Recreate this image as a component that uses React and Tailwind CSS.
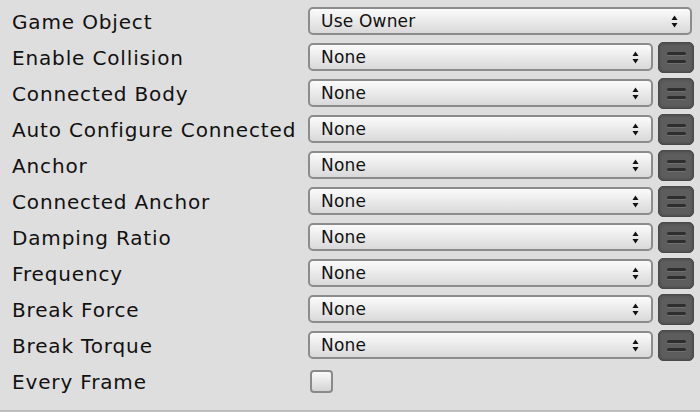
import React from "react";

const rows = [
  "Enable Collision",
  "Connected Body",
  "Auto Configure Connected",
  "Anchor",
  "Connected Anchor",
  "Damping Ratio",
  "Frequency",
  "Break Force",
  "Break Torque",
];

function Arrows() {
  return (
    <svg width="7" height="13" viewBox="0 0 7 13" className="shrink-0">
      <path d="M3.5 0.5 L6.5 5 L0.5 5 Z" fill="#111" />
      <path d="M3.5 12.5 L6.5 8 L0.5 8 Z" fill="#111" />
    </svg>
  );
}

function Select({ value, className }) {
  return (
    <div
      className={
        "flex items-center justify-between h-[28px] rounded-[5px] border-2 border-[#8c8c8c] bg-gradient-to-b from-[#fbfbfb] to-[#d9d9d9] pl-[11px] pr-[12px] " +
        className
      }
    >
      <span className="text-[17px] text-[#111] leading-none tracking-[0.2px] pt-[1px]">{value}</span>
      <Arrows />
    </div>
  );
}

function EqButton() {
  return (
    <div className="w-[36px] h-[31px] ml-[5px] rounded-[5px] bg-[#5d5d5d] border border-[#4a4a4a] shadow-[inset_0_0_3px_#3a3a3a] flex flex-col items-center justify-center gap-[5px]">
      <div className="w-[19px] h-[3px] rounded-full bg-[#2e2e2e] shadow-[0_1px_0_#707070]" />
      <div className="w-[19px] h-[3px] rounded-full bg-[#2e2e2e] shadow-[0_1px_0_#707070]" />
    </div>
  );
}

function Label({ children }) {
  return (
    <div className="w-[308px] shrink-0 pl-[12px] pt-[2px] text-[20px] tracking-[0.85px] text-[#111] whitespace-nowrap leading-none">
      {children}
    </div>
  );
}

export default function App() {
  return (
    <div
      className="w-[700px] h-[412px] bg-[#dedede] border-b-2 border-[#bdbdbd] pt-[3px]"
      style={{ fontFamily: '"DejaVu Sans", "Lucida Grande", sans-serif' }}
    >
      <div className="flex items-center h-[36px]">
        <Label>Game Object</Label>
        <Select value="Use Owner" className="w-[384px]" />
      </div>
      {rows.map((r) => (
        <div key={r} className="flex items-center h-[36px]">
          <Label>{r}</Label>
          <Select value="None" className="w-[345px]" />
          <EqButton />
        </div>
      ))}
      <div className="flex items-center h-[36px]">
        <Label>Every Frame</Label>
        <div className="ml-[2px] w-[23px] h-[23px] rounded-[4px] border-2 border-[#8a8a8a] bg-gradient-to-b from-[#fafafa] to-[#d4d4d4]" />
      </div>
    </div>
  );
}
